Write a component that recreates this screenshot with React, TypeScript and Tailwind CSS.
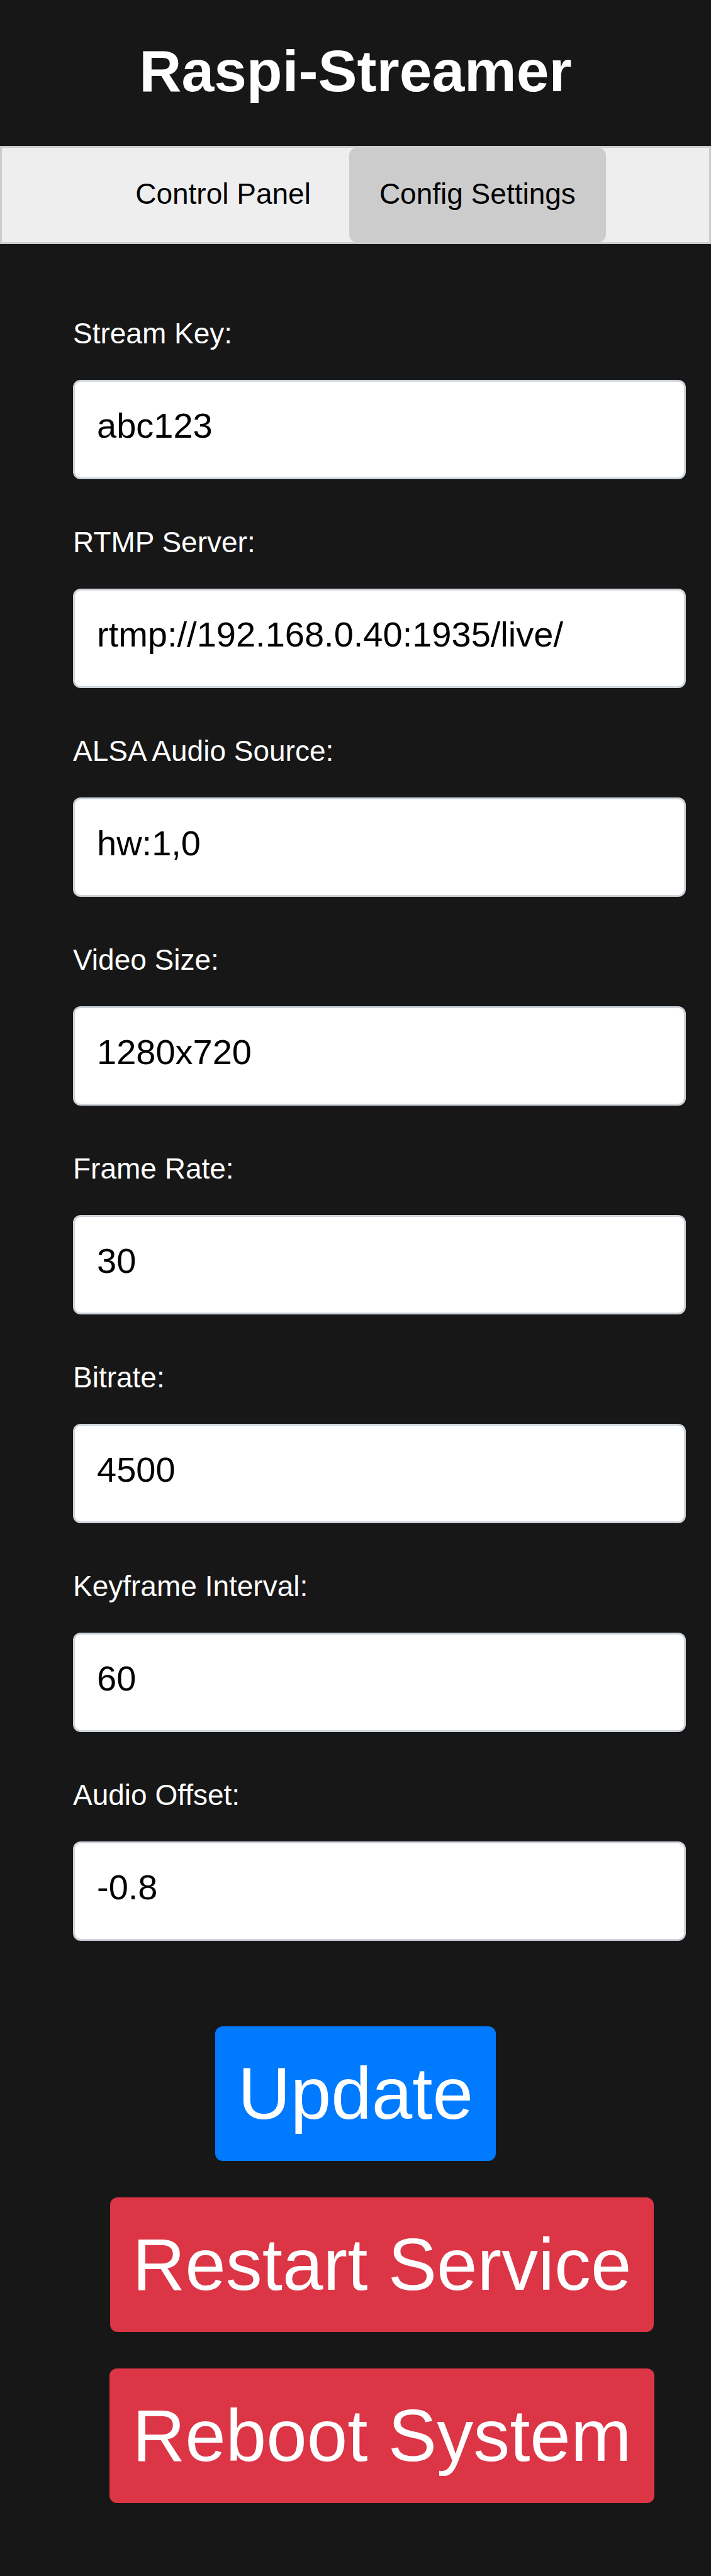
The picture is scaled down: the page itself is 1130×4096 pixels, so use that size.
import { useState } from "react";

const initialFields = [
  { id: "stream_key", label: "Stream Key:", value: "abc123" },
  { id: "rtmp_server", label: "RTMP Server:", value: "rtmp://192.168.0.40:1935/live/" },
  { id: "audio_source", label: "ALSA Audio Source:", value: "hw:1,0" },
  { id: "video_size", label: "Video Size:", value: "1280x720" },
  { id: "frame_rate", label: "Frame Rate:", value: "30" },
  { id: "bitrate", label: "Bitrate:", value: "4500" },
  { id: "keyframe_interval", label: "Keyframe Interval:", value: "60" },
  { id: "audio_offset", label: "Audio Offset:", value: "-0.8" },
];

const tab = "rounded-xl px-12 pt-[37px] pb-[41px] text-[46px] leading-[72px] text-black";
const action = "rounded-xl px-9 py-[41px] text-[116px] leading-[132px] text-white whitespace-nowrap";

function Field({ id, label, value }: { id: string; label: string; value: string }) {
  const [text, setText] = useState(value);
  return (
    <div className="flex flex-col">
      <label htmlFor={id} className="text-[46px] leading-[68px]">
        {label}
      </label>
      <input
        id={id}
        type="text"
        value={text}
        onChange={(e) => setText(e.target.value)}
        className="mt-10 w-full rounded-xl border-3 border-[#ced4da] bg-white px-[35px] pt-9 pb-12 text-[56px] leading-[68px] text-black"
      />
    </div>
  );
}

export default function App() {
  return (
    <div className="min-h-screen bg-[#171717] font-['Liberation_Sans',Arial,sans-serif] text-white">
      <header className="pt-[59px] pb-[65px] text-center">
        <h1 className="text-[93px] leading-[108px] font-bold">Raspi-Streamer</h1>
      </header>
      <nav className="flex justify-center gap-[13px] border-3 border-[#cccccc] bg-[#eeeeee]">
        <button type="button" className={tab}>
          Control Panel
        </button>
        <button type="button" className={`${tab} bg-[#cccccc]`}>
          Config Settings
        </button>
      </nav>
      <main className="pt-[108px] pb-[115px]">
        <form className="flex flex-col" onSubmit={(e) => e.preventDefault()}>
          <div className="flex flex-col gap-[66px] pr-10 pl-[116px]">
            {initialFields.map((f) => (
              <Field key={f.id} {...f} />
            ))}
          </div>
          <button type="submit" className={`${action} mt-[136px] self-center bg-[#007bff]`}>
            Update
          </button>
        </form>
        <div className="mt-[58px] flex flex-col items-center gap-[58px] pl-[84px]">
          <button type="button" className={`${action} bg-[#dc3545]`}>
            Restart Service
          </button>
          <button type="button" className={`${action} bg-[#dc3545]`}>
            Reboot System
          </button>
        </div>
      </main>
    </div>
  );
}
